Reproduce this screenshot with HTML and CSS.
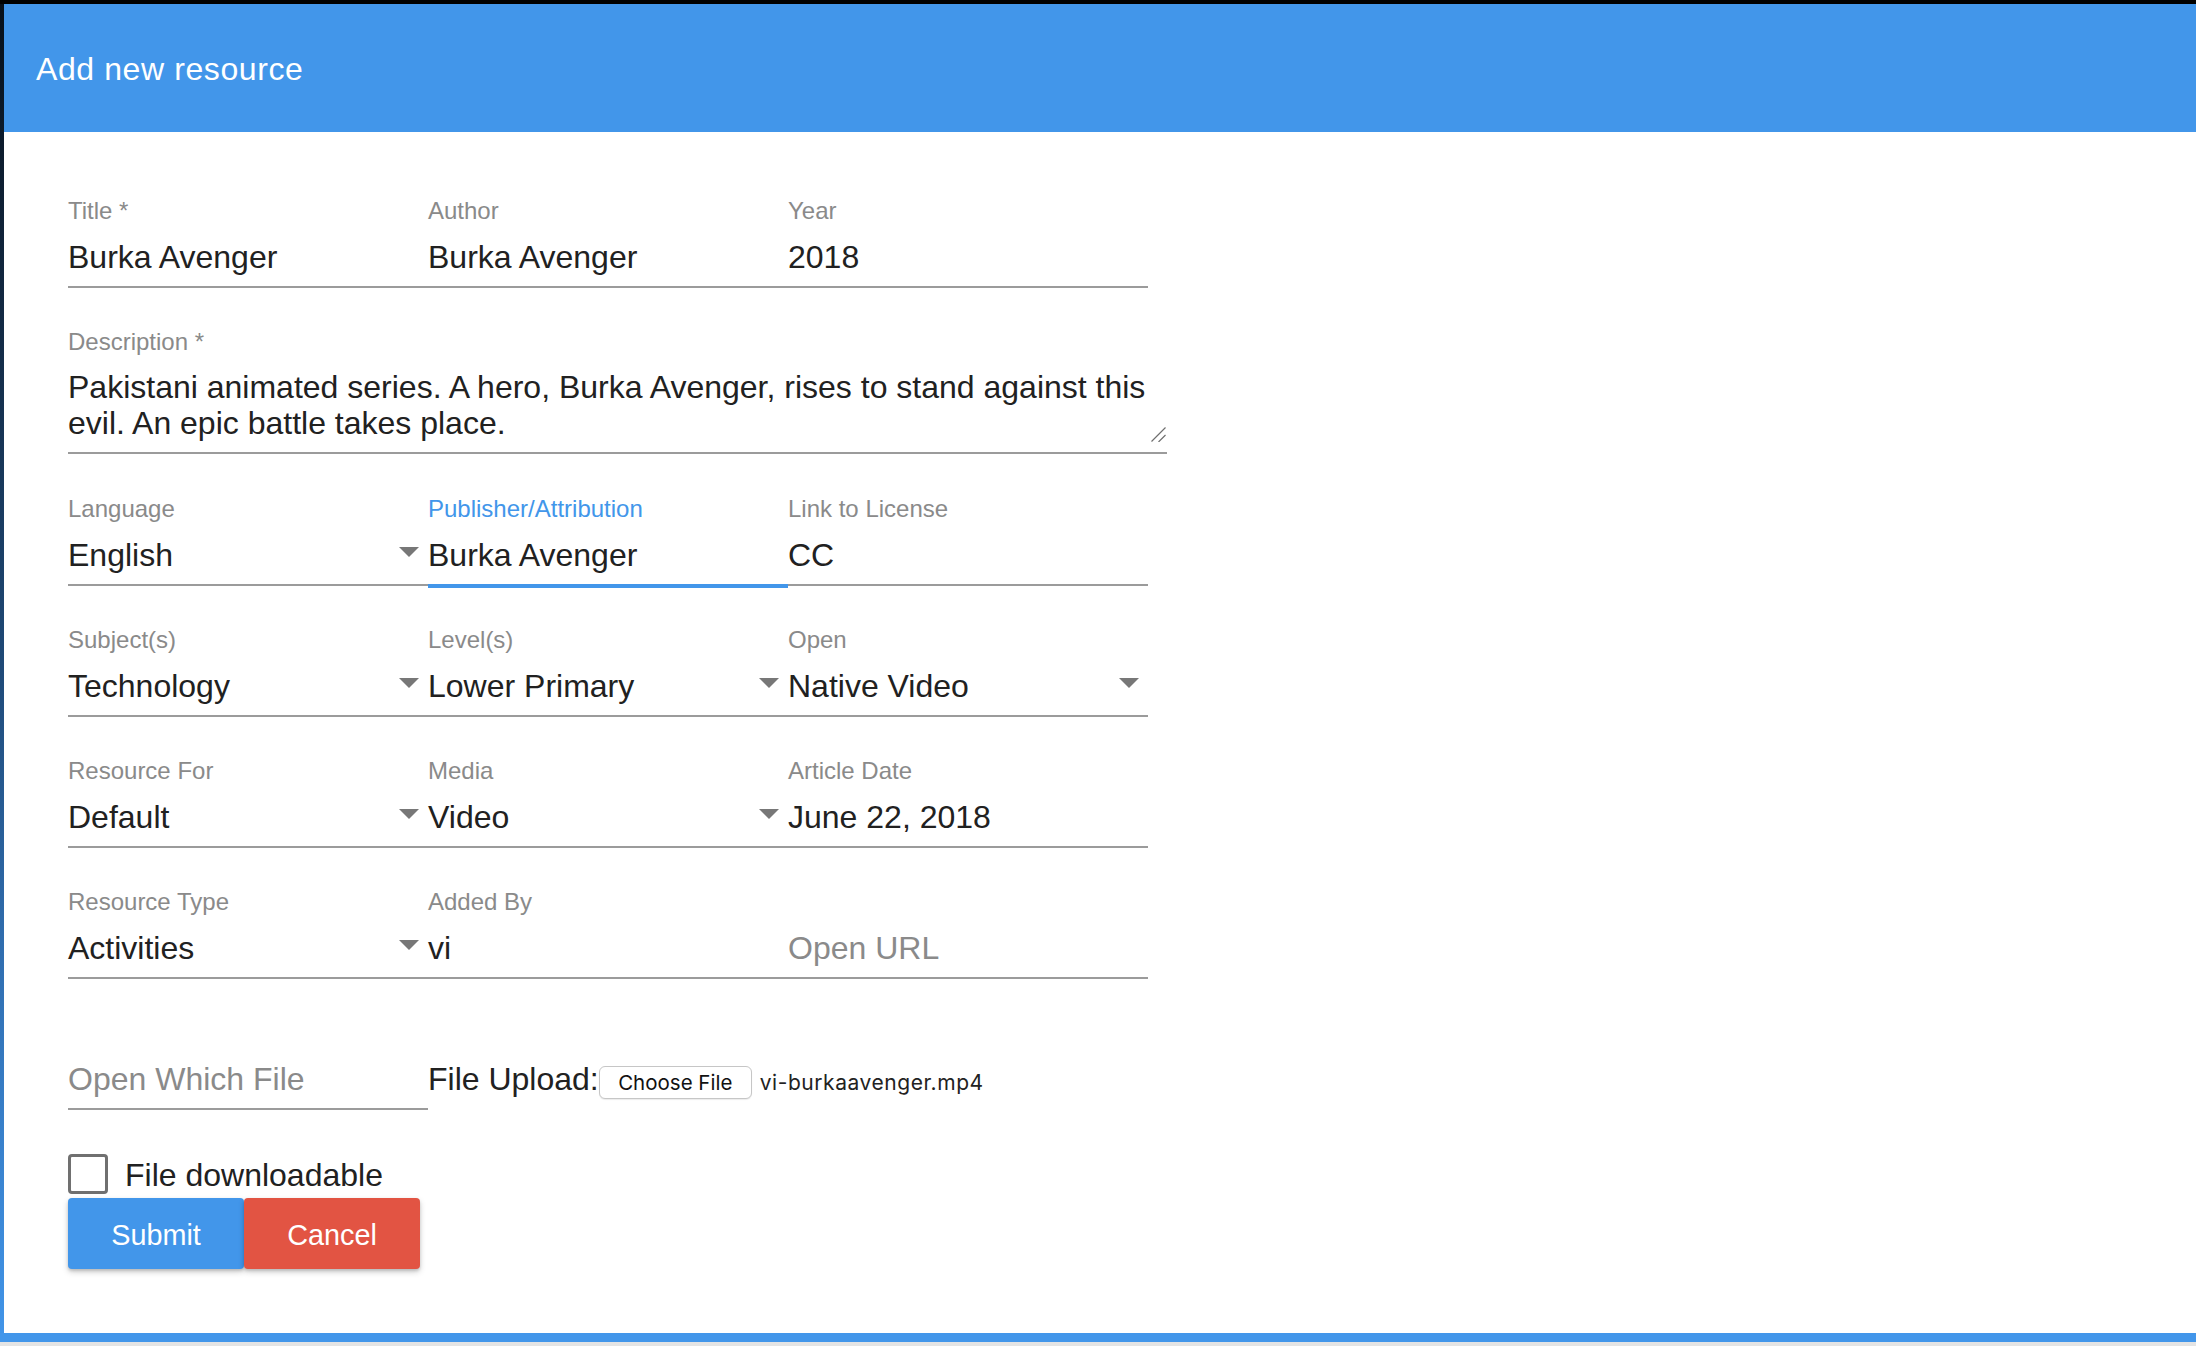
FILE: index.html
```html
<!DOCTYPE html>
<html lang="en">
<head>
<meta charset="utf-8">
<title>Add new resource</title>
<link rel="stylesheet" href="styles.css">
</head>
<body>
<div class="frame">
  <div class="frame-main">
    <div class="edge"></div>
    <div class="dialog">
      <header class="dialog-header">
        <h1 class="dialog-title">Add new resource</h1>
      </header>
      <form class="form">
        <div class="row">
          <div class="field">
            <div class="label">Title *</div>
            <div class="value"><span>Burka Avenger</span></div>
            <div class="line"></div>
          </div>
          <div class="field">
            <div class="label">Author</div>
            <div class="value"><span>Burka Avenger</span></div>
            <div class="line"></div>
          </div>
          <div class="field">
            <div class="label">Year</div>
            <div class="value"><span>2018</span></div>
            <div class="line"></div>
          </div>
        </div>

        <div class="row">
          <div class="field field-desc">
            <div class="label">Description *</div>
            <div class="value-multi">Pakistani animated series. A hero, Burka Avenger, rises to stand against this evil. An epic battle takes place.</div>
            <div class="line"></div>
            <svg class="grip" width="15" height="15" viewBox="0 0 15 15"><path d="M14.5 0.5 L0.5 14.5 M14.5 8 L7.5 15" stroke="#6f6f6f" stroke-width="1.2" fill="none"/></svg>
          </div>
        </div>

        <div class="row">
          <div class="field">
            <div class="label">Language</div>
            <div class="value"><span>English</span><svg class="caret" width="20" height="10" viewBox="0 0 20 10"><polygon points="0,0 20,0 10,10" fill="#777"/></svg></div>
            <div class="line"></div>
          </div>
          <div class="field field-focused">
            <div class="label">Publisher/Attribution</div>
            <div class="value"><span>Burka Avenger</span></div>
            <div class="line"></div>
          </div>
          <div class="field">
            <div class="label">Link to License</div>
            <div class="value"><span>CC</span></div>
            <div class="line"></div>
          </div>
        </div>

        <div class="row">
          <div class="field">
            <div class="label">Subject(s)</div>
            <div class="value"><span>Technology</span><svg class="caret" width="20" height="10" viewBox="0 0 20 10"><polygon points="0,0 20,0 10,10" fill="#777"/></svg></div>
            <div class="line"></div>
          </div>
          <div class="field">
            <div class="label">Level(s)</div>
            <div class="value"><span>Lower Primary</span><svg class="caret" width="20" height="10" viewBox="0 0 20 10"><polygon points="0,0 20,0 10,10" fill="#777"/></svg></div>
            <div class="line"></div>
          </div>
          <div class="field">
            <div class="label">Open</div>
            <div class="value"><span>Native Video</span><svg class="caret" width="20" height="10" viewBox="0 0 20 10"><polygon points="0,0 20,0 10,10" fill="#777"/></svg></div>
            <div class="line"></div>
          </div>
        </div>

        <div class="row">
          <div class="field">
            <div class="label">Resource For</div>
            <div class="value"><span>Default</span><svg class="caret" width="20" height="10" viewBox="0 0 20 10"><polygon points="0,0 20,0 10,10" fill="#777"/></svg></div>
            <div class="line"></div>
          </div>
          <div class="field">
            <div class="label">Media</div>
            <div class="value"><span>Video</span><svg class="caret" width="20" height="10" viewBox="0 0 20 10"><polygon points="0,0 20,0 10,10" fill="#777"/></svg></div>
            <div class="line"></div>
          </div>
          <div class="field">
            <div class="label">Article Date</div>
            <div class="value"><span>June 22, 2018</span></div>
            <div class="line"></div>
          </div>
        </div>

        <div class="row">
          <div class="field">
            <div class="label">Resource Type</div>
            <div class="value"><span>Activities</span><svg class="caret" width="20" height="10" viewBox="0 0 20 10"><polygon points="0,0 20,0 10,10" fill="#777"/></svg></div>
            <div class="line"></div>
          </div>
          <div class="field">
            <div class="label">Added By</div>
            <div class="value"><span>vi</span></div>
            <div class="line"></div>
          </div>
          <div class="field">
            <div class="label"></div>
            <div class="value placeholder"><span>Open URL</span></div>
            <div class="line"></div>
          </div>
        </div>

        <div class="row row-upload">
          <div class="field">
            <div class="label"></div>
            <div class="value placeholder"><span>Open Which File</span></div>
            <div class="line"></div>
          </div>
          <div class="upload">
            <span class="upload-label">File Upload:</span>
            <span class="file-btn">Choose File</span>
            <span class="file-name">vi-burkaavenger.mp4</span>
          </div>
        </div>

        <div class="check-row">
          <span class="checkbox"></span>
          <span class="check-label">File downloadable</span>
        </div>

        <div class="actions">
          <button type="button" class="btn btn-primary">Submit</button>
          <button type="button" class="btn btn-danger">Cancel</button>
        </div>
      </form>
    </div>
  </div>
  <div class="frame-bottom"></div>
</div>
</body>
</html>
```

FILE: styles.css
```css
* {
  box-sizing: border-box;
}

html,
body {
  margin: 0;
  padding: 0;
}

body {
  width: 2196px;
  height: 1346px;
  overflow: hidden;
  background: #fff;
  font-family: "Liberation Sans", Arial, Helvetica, sans-serif;
}

.frame {
  height: 1346px;
  display: flex;
  flex-direction: column;
  border-top: 4px solid #000;
}

.frame-main {
  flex: 1;
  display: flex;
  min-height: 0;
}

.edge {
  width: 4px;
  flex: none;
  background: linear-gradient(to bottom, #07101a 0%, #132b46 25%, #1f4a78 50%, #2f6cad 70%, #4194e8 100%);
}

.dialog {
  flex: 1;
  background: #fff;
  display: flex;
  flex-direction: column;
}

.dialog-header {
  height: 128px;
  flex: none;
  background: #4296ea;
  display: flex;
  align-items: center;
  padding-left: 32px;
  padding-top: 1px;
}

.dialog-title {
  margin: 0;
  font-size: 32px;
  line-height: 40px;
  font-weight: normal;
  letter-spacing: 0.6px;
  color: #fff;
}

.form {
  padding: 25px 0 0 64px;
}

.row {
  display: flex;
}

.field {
  width: 360px;
  flex: none;
  padding-top: 39px;
  position: relative;
}

.label {
  font-size: 24px;
  line-height: 30px;
  height: 30px;
  color: #8a8a8a;
  white-space: nowrap;
}

.value {
  margin-top: 11px;
  height: 40px;
  font-size: 32px;
  line-height: 40px;
  color: #212121;
  display: flex;
  white-space: nowrap;
}

.value.placeholder {
  color: #8a8a8a;
}

.caret {
  flex: none;
  margin-left: auto;
  margin-right: 9px;
  margin-top: 12px;
}

.line {
  margin-top: 9px;
  height: 2px;
  background: #9b9b9b;
}

.field-focused .label {
  color: #4296ea;
}

.field-focused .line {
  height: 4px;
  margin-bottom: -2px;
  background: #4296ea;
  position: relative;
}

.field-desc {
  width: 1099px;
  margin-bottom: 1px;
}

.value-multi {
  margin-top: 12px;
  height: 72px;
  font-size: 32px;
  line-height: 36px;
  color: #212121;
}

.field-desc .line {
  margin-top: 11px;
}

.grip {
  position: absolute;
  right: 1px;
  bottom: 12px;
}

.row-upload {
  align-items: flex-start;
}

.upload {
  display: flex;
  align-items: baseline;
  padding-top: 80px;
}

.upload-label {
  font-size: 32px;
  line-height: 40px;
  color: #212121;
}

.file-btn {
  width: 153px;
  font-family: Inter, "Liberation Sans", sans-serif;
  font-size: 20.5px;
  line-height: 24px;
  padding: 4px 0 3px;
  text-align: center;
  border: 1px solid #c6c6c6;
  border-radius: 6px;
  background: #fff;
  color: #111;
  box-shadow: 0 1px 1px rgba(0, 0, 0, 0.08);
}

.file-name {
  margin-left: 8px;
  font-family: Inter, "Liberation Sans", sans-serif;
  font-size: 21px;
  letter-spacing: 0.55px;
  line-height: 24px;
  color: #222;
}

.check-row {
  display: flex;
  align-items: center;
  gap: 17px;
  margin-top: 44px;
}

.checkbox {
  width: 40px;
  height: 40px;
  border: 3.5px solid #707070;
  border-radius: 4px;
  background: #fff;
}

.check-label {
  font-size: 32px;
  line-height: 40px;
  color: #212121;
  position: relative;
  top: 1px;
}

.actions {
  display: flex;
  margin-top: 4px;
}

.btn {
  width: 176px;
  height: 71px;
  border: 0;
  border-radius: 4px;
  color: #fff;
  font-family: "Liberation Sans", Arial, sans-serif;
  font-size: 28.8px;
  line-height: 40px;
  padding: 2px 0 0;
  box-shadow: 0 3px 6px rgba(0, 0, 0, 0.18), 0 2px 3px rgba(0, 0, 0, 0.14);
  cursor: pointer;
}

.btn-primary {
  background: #4296ea;
}

.btn-danger {
  background: #e25443;
}

.frame-bottom {
  height: 13px;
  flex: none;
  background: #4296ea;
  border-bottom: 4px solid #e4e4e4;
}
```
